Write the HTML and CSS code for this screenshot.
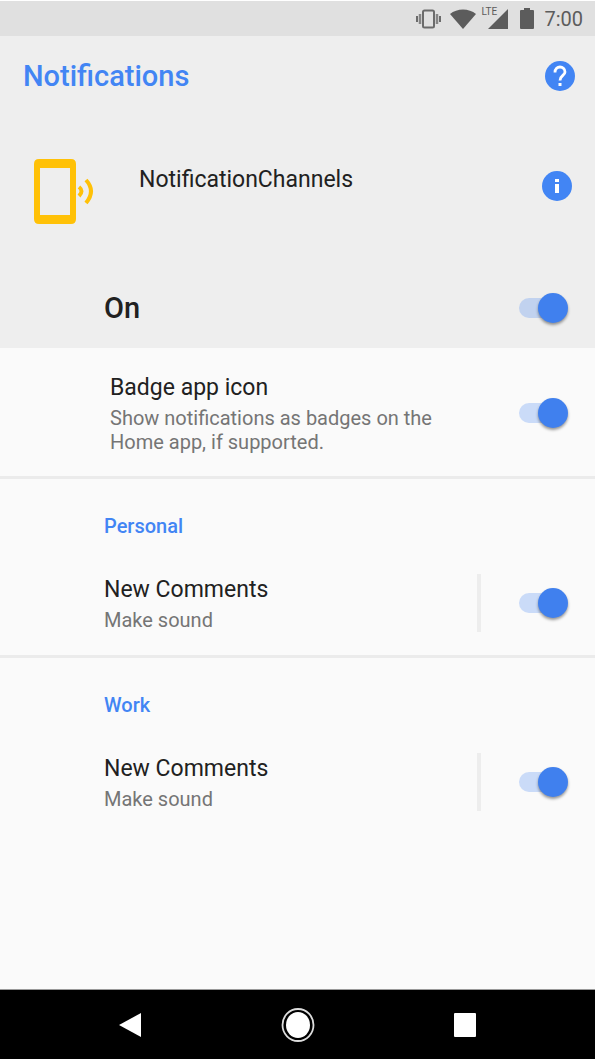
FILE: index.html
```
<!DOCTYPE html>
<html lang="en">
<head>
<meta charset="utf-8">
<meta name="viewport" content="width=device-width, initial-scale=1">
<title>Notifications</title>
<link rel="stylesheet" href="styles.css">
</head>
<body>
<div class="screen">
  <div class="status-bar">
    <svg class="status-vibrate" width="28" height="20" viewBox="0 0 28 20" aria-hidden="true">
      <rect x="8" y="1.500" width="11" height="17" rx="1.500" fill="none" stroke="#6b6b6b" stroke-width="2"/>
      <path d="M2 7v6M25 7v6" stroke="#6b6b6b" stroke-width="2"/>
      <path d="M5 5v10M22 5v10" stroke="#858585" stroke-width="2.500"/>
    </svg>
    <svg class="status-wifi" width="26" height="20" viewBox="0 0 26 20" aria-hidden="true">
      <path d="M0 5C7-1 19-1 26 5L13 20z" fill="#5c5c5c"/>
    </svg>
    <span class="signal">
      <span class="signal-label">LTE</span>
      <svg width="20" height="20" viewBox="0 0 20 20" aria-hidden="true"><path d="M20 0v20H0z" fill="#5c5c5c"/></svg>
    </span>
    <svg class="status-battery" width="14" height="21" viewBox="0 0 14 21" aria-hidden="true">
      <path d="M4 0h6v2h3q1 0 1 1v17q0 1-1 1H1q-1 0-1-1V3q0-1 1-1h3z" fill="#5c5c5c"/>
    </svg>
    <span class="clock">7:00</span>
  </div>

  <header class="header">
    <div class="app-bar">
      <h1 class="page-title">Notifications</h1>
      <button class="icon-button" type="button" aria-label="Help">
        <svg width="30" height="30" viewBox="0 0 30 30" aria-hidden="true">
          <circle cx="15" cy="15" r="15" fill="#4285f4"/>
          <path d="M10 11.500C10 4 20 4.500 20 11C20 14.500 15 14.500 15 19.500" fill="none" stroke="#fff" stroke-width="2.800"/>
          <rect x="13.500" y="22" width="3" height="3" fill="#fff"/>
        </svg>
      </button>
    </div>
    <div class="app-row">
      <svg class="app-icon" width="60" height="66" viewBox="0 0 60 66" aria-hidden="true">
        <path fill="#ffc107" fill-rule="evenodd" d="M5 0H37q5 0 5 5V60q0 5-5 5H5q-5 0-5-5V5Q0 0 5 0zM6 9V56H36V9z"/>
        <path d="M45 28Q50 32 45 37M52 21Q62 32 52 44" fill="none" stroke="#ffc107" stroke-width="4"/>
      </svg>
      <h2 class="app-name">NotificationChannels</h2>
      <button class="icon-button" type="button" aria-label="App info">
        <svg width="30" height="30" viewBox="0 0 30 30" aria-hidden="true">
          <circle cx="15" cy="15" r="15" fill="#4285f4"/>
          <path d="M13 8h4v3h-4zM13 13h4v9h-4z" fill="#fff"/>
        </svg>
      </button>
    </div>
    <div class="master-row">
      <label class="master-label" for="all">On</label>
      <input class="switch" id="all" type="checkbox" role="switch" checked>
    </div>
  </header>

  <main class="content">
    <section class="badge-row">
      <div class="row-text">
        <label class="row-title" for="badge">Badge app icon</label>
        <p class="row-note">Show notifications as badges on the Home app, if supported.</p>
      </div>
      <input class="switch" id="badge" type="checkbox" role="switch" checked>
    </section>
    <section class="group">
      <h3 class="group-title">Personal</h3>
      <div class="channel-row">
        <div class="row-text">
          <label class="row-title" for="personal">New Comments</label>
          <p class="row-note">Make sound</p>
        </div>
        <span class="rule"></span>
        <input class="switch" id="personal" type="checkbox" role="switch" checked>
      </div>
    </section>
    <section class="group">
      <h3 class="group-title">Work</h3>
      <div class="channel-row">
        <div class="row-text">
          <label class="row-title" for="work">New Comments</label>
          <p class="row-note">Make sound</p>
        </div>
        <span class="rule"></span>
        <input class="switch" id="work" type="checkbox" role="switch" checked>
      </div>
    </section>
  </main>

  <nav class="nav-bar" aria-label="System">
    <button class="nav-button" type="button" aria-label="Back">
      <svg width="22" height="26" viewBox="0 0 22 26" aria-hidden="true"><path d="M22 1v24L0 13z" fill="#fff"/></svg>
    </button>
    <button class="nav-button" type="button" aria-label="Home">
      <svg width="34" height="34" viewBox="0 0 34 34" aria-hidden="true">
        <ellipse cx="17" cy="17" rx="15.500" ry="16" fill="none" stroke="#ddd" stroke-width="1.800"/>
        <ellipse cx="17" cy="17" rx="12" ry="13" fill="#fff"/>
      </svg>
    </button>
    <button class="nav-button" type="button" aria-label="Recent apps">
      <svg width="22" height="24" viewBox="0 0 22 24" aria-hidden="true"><rect width="22" height="24" rx="1" fill="#fff"/></svg>
    </button>
  </nav>
</div>
</body>
</html>
```
FILE: styles.css
```
* { box-sizing: border-box; }

body {
  margin: 0;
  background: #fff;
  color: #212121;
  font-family: Roboto, sans-serif;
}

h1, h2, h3, p { margin: 0; }

button {
  border: 0;
  padding: 0;
  background: none;
  cursor: pointer;
}

svg { display: block; }

.screen {
  display: flex;
  flex-direction: column;
  min-height: 100vh;
  padding: 1px 1px 1px 0;
}

.status-bar {
  display: flex;
  align-items: center;
  justify-content: flex-end;
  height: 35px;
  padding-right: 12px;
  background: #e0e0e0;
  color: #5c5c5c;
}

.status-wifi { margin-left: 7px; }

.signal {
  display: flex;
  position: relative;
  margin-left: 12px;
}

.signal-label {
  position: absolute;
  top: -3px;
  left: -7px;
  font-size: 10px;
  line-height: 12px;
}

.status-battery { margin-left: 12px; }

.clock {
  margin-left: 10px;
  font-size: 20px;
  line-height: 24px;
}

.header { background: #eee; }

.app-bar {
  display: flex;
  align-items: center;
  justify-content: space-between;
  height: 80px;
  padding: 0 20px 0 23px;
}

.page-title {
  color: #4285f4;
  font-size: 29px;
  font-weight: 500;
  line-height: 32px;
}

.app-row {
  display: flex;
  align-items: center;
  height: 152px;
  padding: 0 23px 12px 34px;
}

.app-icon { margin-top: 12px; }

.app-name {
  flex: 1;
  margin-left: 45px;
  padding-bottom: 12px;
  font-size: 23px;
  font-weight: 400;
  line-height: 28px;
}

.master-row {
  display: flex;
  align-items: center;
  justify-content: space-between;
  height: 80px;
  padding: 0 27px 0 104px;
}

.master-label {
  font-size: 29px;
  font-weight: 500;
  line-height: 32px;
}

.switch {
  appearance: none;
  position: relative;
  flex: none;
  width: 49px;
  height: 30px;
  margin: 0;
  cursor: pointer;
}

.switch::before {
  content: "";
  position: absolute;
  top: 5px;
  left: 0;
  width: 42px;
  height: 20px;
  border-radius: 10px;
  background: rgba(66, 133, 244, 0.26);
}

.switch::after {
  content: "";
  position: absolute;
  top: 0;
  left: 0;
  width: 30px;
  height: 30px;
  border-radius: 50%;
  background: #fafafa;
  box-shadow: 0 2px 3px rgba(0, 0, 0, 0.4);
}

.switch:checked::after {
  left: auto;
  right: 0;
  background: #4080ee;
}

.content {
  flex: 1;
  background: #fafafa;
}

.badge-row {
  display: flex;
  align-items: center;
  padding: 24px 27px 22px 110px;
}

.badge-row .row-text {
  flex: 1;
  padding-right: 64px;
}

.row-title {
  display: block;
  font-size: 23px;
  line-height: 32px;
}

.row-note {
  margin-top: 2px;
  color: #757575;
  font-size: 20px;
  line-height: 24px;
}

.group {
  padding: 31px 27px 23px 104px;
  border-top: 3px solid #ebebeb;
}

.group-title {
  color: #4285f4;
  font-size: 20px;
  font-weight: 500;
  line-height: 32px;
}

.channel-row {
  display: flex;
  align-items: center;
  padding-top: 32px;
}

.channel-row .row-text { flex: 1; }

.rule {
  align-self: stretch;
  width: 4px;
  margin-right: 38px;
  background: #ededed;
}

.nav-bar {
  display: flex;
  height: 70px;
  padding: 0 46px;
  border-top: 1px solid #999;
  background: #000;
}

.nav-button {
  display: flex;
  flex: 1;
  align-items: center;
  justify-content: center;
}
```
